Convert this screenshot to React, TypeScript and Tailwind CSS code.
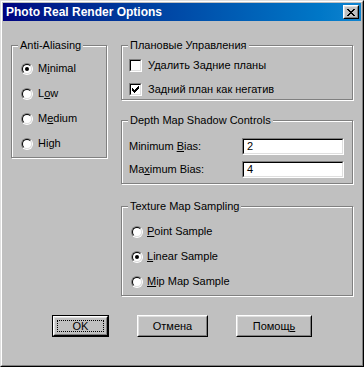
import type { ReactNode } from "react";

const CHECK = [
  "......X",
  ".....XX",
  "X...XXX",
  "XX.XXX.",
  "XXXXX..",
  ".XXX...",
  "..X....",
];

const CLOSE_X = [
  "XX....XX",
  ".XX..XX.",
  "..XXXX..",
  "...XX...",
  "..XXXX..",
  ".XX..XX.",
  "XX....XX",
];

function PixelGlyph({ rows }: { rows: string[] }) {
  const w = rows[0].length;
  const h = rows.length;
  return (
    <svg width={w} height={h} viewBox={`0 0 ${w} ${h}`} shapeRendering="crispEdges">
      {rows.flatMap((row, y) =>
        row.split("").map((c, x) =>
          c === "X" ? <rect key={`${x}-${y}`} x={x} y={y} width={1} height={1} fill="#000" /> : null
        )
      )}
    </svg>
  );
}

function Radio({ checked }: { checked?: boolean }) {
  return (
    <span className="flex h-3 w-3 shrink-0 rounded-full border border-t-[#808080] border-l-[#808080] border-r-white border-b-white">
      <span className="flex h-full w-full items-center justify-center rounded-full border border-t-black border-l-black border-r-[#dfdfdf] border-b-[#dfdfdf] bg-white">
        {checked && <span className="h-1 w-1 rounded-full bg-black" />}
      </span>
    </span>
  );
}

function Checkbox({ checked }: { checked?: boolean }) {
  return (
    <span className="flex h-[13px] w-[13px] shrink-0 border border-t-[#808080] border-l-[#808080] border-r-white border-b-white">
      <span className="flex h-full w-full items-center justify-center border border-t-black border-l-black border-r-[#dfdfdf] border-b-[#dfdfdf] bg-white">
        {checked && <PixelGlyph rows={CHECK} />}
      </span>
    </span>
  );
}

function Group({
  title,
  className,
  bodyClassName,
  children,
}: {
  title: string;
  className: string;
  bodyClassName: string;
  children: ReactNode;
}) {
  return (
    <fieldset
      className={`border border-[#808080] shadow-[1px_1px_0_#fff,inset_1px_1px_0_#fff] ${className}`}
    >
      <legend className="ml-[6px] bg-[#c0c0c0] px-[2px] leading-[13px]">{title}</legend>
      <div className={bodyClassName}>{children}</div>
    </fieldset>
  );
}

function Button({ children, width, isDefault }: { children: ReactNode; width: string; isDefault?: boolean }) {
  const face = (
    <span className="flex h-full w-full border border-t-white border-l-white border-r-black border-b-black">
      <span className="flex h-full w-full items-center justify-center border border-t-[#dfdfdf] border-l-[#dfdfdf] border-r-[#808080] border-b-[#808080] bg-[#c0c0c0] p-[2px]">
        {isDefault ? (
          <span className="flex h-full w-full items-center justify-center border border-dotted border-black">
            {children}
          </span>
        ) : (
          children
        )}
      </span>
    </span>
  );
  return (
    <div className={`h-[22px] ${width} ${isDefault ? "border border-black" : ""}`}>{face}</div>
  );
}

export default function App() {
  return (
    <div className="h-[367px] w-[364px] border border-t-[#dfdfdf] border-l-[#dfdfdf] border-r-black border-b-black bg-[#c0c0c0] font-['Liberation_Sans',Arial,sans-serif] text-[11px] text-black">
      <div className="flex h-full w-full flex-col border border-t-white border-l-white border-r-[#808080] border-b-[#808080] p-[1px]">
        <div className="flex h-[18px] shrink-0 items-center justify-between bg-gradient-to-r from-[#000080] to-[#1084d0] pl-[3px] pr-[2px]">
          <span className="text-[12px] font-bold text-white">Photo Real Render Options</span>
          <span className="flex h-[14px] w-[16px] border border-t-white border-l-white border-r-black border-b-black">
            <span className="flex h-full w-full items-center justify-center border border-t-[#dfdfdf] border-l-[#dfdfdf] border-r-[#808080] border-b-[#808080] bg-[#c0c0c0]">
              <PixelGlyph rows={CLOSE_X} />
            </span>
          </span>
        </div>

        <div className="flex flex-col pl-[8px] pt-[18px]">
          <div className="flex gap-[14px]">
            <div className="w-[96px]">
              <Group title="Anti-Aliasing" className="h-[119px]" bodyClassName="pl-[9px] pt-[4px]">
                {[
                  ["M", "i", "nimal", true],
                  ["L", "o", "w", false],
                  ["M", "e", "dium", false],
                  ["High", "", "", false],
                ].map(([a, u, b, c]) => (
                  <div key={String(a) + String(b)} className="flex h-[25px] items-center gap-[5px]">
                    <Radio checked={Boolean(c)} />
                    <span>
                      {a}
                      <u>{u}</u>
                      {b}
                    </span>
                  </div>
                ))}
              </Group>
            </div>

            <div className="flex w-[232px] flex-col">
              <Group title="Плановые Управления" className="h-[61px]" bodyClassName="pl-[7px] pt-[1px]">
                <div className="flex h-[24px] items-center gap-[6px]">
                  <Checkbox />
                  <span>Удалить Задние планы</span>
                </div>
                <div className="flex h-[24px] items-center gap-[6px]">
                  <Checkbox checked />
                  <span>Задний план как негатив</span>
                </div>
              </Group>

              <Group
                title="Depth Map Shadow Controls"
                className="mt-[14px] h-[70px]"
                bodyClassName="flex flex-col gap-[6px] pl-[7px] pt-[11px]"
              >
                <div className="flex h-[17px] items-center">
                  <span className="w-[113px]">
                    Minimum <u>B</u>ias:
                  </span>
                  <span className="flex h-[17px] w-[102px] border border-t-[#808080] border-l-[#808080] border-r-white border-b-white">
                    <span className="flex h-full w-full items-center border border-t-black border-l-black border-r-[#dfdfdf] border-b-[#dfdfdf] bg-white pl-[3px]">
                      2
                    </span>
                  </span>
                </div>
                <div className="flex h-[17px] items-center">
                  <span className="w-[113px]">
                    Ma<u>x</u>imum Bias:
                  </span>
                  <span className="flex h-[17px] w-[102px] border border-t-[#808080] border-l-[#808080] border-r-white border-b-white">
                    <span className="flex h-full w-full items-center border border-t-black border-l-black border-r-[#dfdfdf] border-b-[#dfdfdf] bg-white pl-[3px]">
                      4
                    </span>
                  </span>
                </div>
              </Group>

              <Group title="Texture Map Sampling" className="mt-[16px] h-[96px]" bodyClassName="pl-[9px] pt-[6px]">
                {[
                  ["P", "oint Sample", false],
                  ["L", "inear Sample", true],
                  ["M", "ip Map Sample", false],
                ].map(([u, b, c]) => (
                  <div key={String(b)} className="flex h-[25px] items-center gap-[4px]">
                    <Radio checked={Boolean(c)} />
                    <span>
                      <u>{u}</u>
                      {b}
                    </span>
                  </div>
                ))}
              </Group>
            </div>
          </div>

          <div className="ml-[41px] mt-[19px] flex gap-[28px]">
            <Button width="w-[57px]" isDefault>
              OK
            </Button>
            <Button width="w-[71px]">Отмена</Button>
            <Button width="w-[76px]">
              Помощ<u>ь</u>
            </Button>
          </div>
        </div>
      </div>
    </div>
  );
}
